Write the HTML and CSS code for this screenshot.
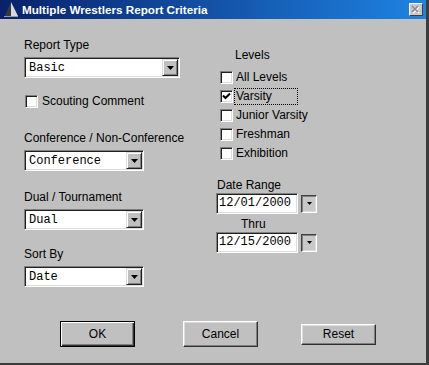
FILE: index.html
```html
<!DOCTYPE html>
<html lang="en">
<head>
    <meta charset="UTF-8">
    <title>Multiple Wrestlers Report Criteria</title>
    <link rel="stylesheet" href="styles.css">
</head>
<body>
    <div class="window">
        <div class="titlebar">
            <svg class="app-icon" width="16" height="15" viewBox="0 0 16 15">
                <polygon points="8,0 2,14 8,14" fill="#3a3a3a"/>
                <polygon points="8,0 8,14 15,14" fill="#d8d8d8"/>
                <line x1="1" y1="14.5" x2="15" y2="14.5" stroke="#9a9a9a"/>
            </svg>
            <span class="title">Multiple Wrestlers Report Criteria</span>
            <div class="close-btn">
                <svg width="10" height="9" viewBox="0 0 10 9">
                    <path d="M2 2 L8 8 M8 2 L2 8" stroke="#fff" stroke-width="1.6"/>
                    <path d="M1 1 L7 7 M7 1 L1 7" stroke="#8a8a8a" stroke-width="1.6"/>
                </svg>
            </div>
        </div>

        <div class="content">
            <div class="col-left">
                <div class="label lbl-report">Report Type</div>
                <div class="combo combo-wide">
                    <span class="combo-text">Basic</span>
                    <span class="drop"><svg width="7" height="4" viewBox="0 0 7 4"><polygon points="0,0 7,0 3.5,4" fill="#000"/></svg></span>
                </div>

                <div class="check check-scout">
                    <span class="box"></span>
                    <span class="check-text">Scouting Comment</span>
                </div>

                <div class="label lbl-conf">Conference / Non-Conference</div>
                <div class="combo">
                    <span class="combo-text">Conference</span>
                    <span class="drop"><svg width="7" height="4" viewBox="0 0 7 4"><polygon points="0,0 7,0 3.5,4" fill="#000"/></svg></span>
                </div>

                <div class="label lbl-dual">Dual / Tournament</div>
                <div class="combo">
                    <span class="combo-text">Dual</span>
                    <span class="drop"><svg width="7" height="4" viewBox="0 0 7 4"><polygon points="0,0 7,0 3.5,4" fill="#000"/></svg></span>
                </div>

                <div class="label lbl-sort">Sort By</div>
                <div class="combo">
                    <span class="combo-text">Date</span>
                    <span class="drop"><svg width="7" height="4" viewBox="0 0 7 4"><polygon points="0,0 7,0 3.5,4" fill="#000"/></svg></span>
                </div>
            </div>

            <div class="col-right">
                <div class="label lbl-levels">Levels</div>
                <div class="levels">
                    <div class="check level">
                        <span class="box"></span>
                        <span class="level-text">All Levels</span>
                    </div>
                    <div class="check level">
                        <span class="box">
                            <svg width="9" height="9" viewBox="0 0 9 9"><path d="M1 3.5 L3.5 6 L8 1.5" stroke="#000" stroke-width="2" fill="none"/></svg>
                        </span>
                        <span class="level-text focused">Varsity</span>
                    </div>
                    <div class="check level">
                        <span class="box"></span>
                        <span class="level-text">Junior Varsity</span>
                    </div>
                    <div class="check level">
                        <span class="box"></span>
                        <span class="level-text">Freshman</span>
                    </div>
                    <div class="check level">
                        <span class="box"></span>
                        <span class="level-text">Exhibition</span>
                    </div>
                </div>

                <div class="label lbl-range">Date Range</div>
                <div class="date-row">
                    <div class="date-field">12/01/2000</div>
                    <div class="date-btn"><svg width="5" height="3" viewBox="0 0 5 3"><polygon points="0,0 5,0 2.5,3" fill="#000"/></svg></div>
                </div>
                <div class="label lbl-thru">Thru</div>
                <div class="date-row">
                    <div class="date-field">12/15/2000</div>
                    <div class="date-btn"><svg width="5" height="3" viewBox="0 0 5 3"><polygon points="0,0 5,0 2.5,3" fill="#000"/></svg></div>
                </div>
            </div>
        </div>

        <div class="footer">
            <button class="btn btn-default btn-ok">OK</button>
            <button class="btn btn-cancel">Cancel</button>
            <button class="btn btn-reset">Reset</button>
        </div>
    </div>
</body>
</html>
```

FILE: styles.css
```css
body {
    margin: 0;
    font-family: "Liberation Sans", Arial, sans-serif;
    font-size: 12px;
    color: #000;
    background: #c0c0c0;
}
.window {
    width: 429px;
    height: 365px;
    box-sizing: border-box;
    display: flex;
    flex-direction: column;
    background: #c0c0c0;
    border-right: 3px solid #3c3c3c;
    border-bottom: 2px solid #3c3c3c;
}
.titlebar {
    height: 19px;
    display: flex;
    align-items: center;
    background: linear-gradient(to right, #08216b, #1e83e2);
}
.app-icon {
    margin-left: 3px;
}
.title {
    margin-left: 3px;
    color: #fff;
    font-weight: bold;
    font-size: 11.7px;
}
.close-btn {
    margin-left: auto;
    margin-right: 3px;
    width: 14px;
    height: 13px;
    box-sizing: border-box;
    display: flex;
    align-items: center;
    justify-content: center;
    background: #c8c8c8;
    border: 1px solid;
    border-color: #fff #404040 #404040 #fff;
}
.content {
    flex: 1;
    display: grid;
    grid-template-columns: 192px 1fr;
    padding-left: 24px;
}
.col-left,
.col-right {
    display: flex;
    flex-direction: column;
    align-items: flex-start;
}
.label {
    line-height: 14px;
    white-space: nowrap;
}
.lbl-report {
    margin-top: 19px;
}
.lbl-conf {
    margin-top: 23px;
}
.lbl-dual {
    margin-top: 19px;
}
.lbl-sort {
    margin-top: 17px;
}
.combo {
    margin-top: 5px;
    width: 120px;
    height: 21px;
    box-sizing: border-box;
    display: flex;
    align-items: center;
    background: #fff;
    border: 1px solid;
    border-color: #808080 #fff #fff #808080;
    box-shadow: inset 1px 1px #202020, inset -1px -1px #dcdcdc;
}
.combo-wide {
    width: 156px;
}
.combo-text {
    flex: 1;
    padding-left: 4px;
    font-family: "Liberation Mono", "Courier New", monospace;
    font-size: 12px;
}
.drop {
    width: 16px;
    height: 17px;
    box-sizing: border-box;
    margin-right: 1px;
    display: flex;
    align-items: center;
    justify-content: center;
    background: #c0c0c0;
    border: 1px solid;
    border-color: #dcdcdc #202020 #202020 #dcdcdc;
    box-shadow: inset 1px 1px #fff, inset -1px -1px #808080;
}
.check {
    display: flex;
    align-items: center;
}
.check-scout {
    margin-top: 17px;
    margin-left: 1px;
    height: 13px;
}
.check-text {
    margin-left: 4px;
    line-height: 13px;
}
.box {
    width: 13px;
    height: 13px;
    flex-shrink: 0;
    box-sizing: border-box;
    display: flex;
    align-items: center;
    justify-content: center;
    background: #fff;
    border: 1px solid;
    border-color: #808080 #fff #fff #808080;
    box-shadow: inset 1px 1px #202020, inset -1px -1px #dcdcdc;
}
.lbl-levels {
    margin-top: 29px;
    margin-left: 19px;
}
.levels {
    margin-top: 6px;
    margin-left: 4px;
}
.level {
    height: 19px;
}
.level-text {
    margin-left: 1px;
    width: 64px;
    height: 17px;
    line-height: 15px;
    box-sizing: border-box;
    padding-left: 1px;
    border: 1px dotted transparent;
    white-space: nowrap;
}
.level-text.focused {
    border-color: #000;
}
.lbl-range {
    margin-top: 15px;
    margin-left: 1px;
}
.lbl-thru {
    margin-top: 3px;
    margin-left: 25px;
}
.date-row {
    margin-top: 1px;
    display: flex;
    align-items: center;
}
.date-field {
    width: 82px;
    height: 21px;
    box-sizing: border-box;
    padding-left: 2px;
    line-height: 19px;
    font-family: "Liberation Mono", "Courier New", monospace;
    font-size: 12px;
    background: #fff;
    border: 1px solid;
    border-color: #808080 #fff #fff #808080;
    box-shadow: inset 1px 1px #202020, inset -1px -1px #dcdcdc;
}
.date-btn {
    margin-left: 3px;
    width: 16px;
    height: 18px;
    box-sizing: border-box;
    display: flex;
    align-items: center;
    justify-content: center;
    background: #c8c8c8;
    border: 1px solid;
    border-color: #404040 #fff #fff #404040;
    box-shadow: inset 1px 1px #808080, inset -1px -1px #dcdcdc;
}
.footer {
    height: 58px;
    display: flex;
    align-items: center;
}
.btn {
    width: 75px;
    height: 26px;
    box-sizing: border-box;
    padding: 0;
    font-family: "Liberation Sans", Arial, sans-serif;
    font-size: 12px;
    color: #000;
    background: #c0c0c0;
    border: 1px solid;
    border-color: #fff #303030 #303030 #fff;
    box-shadow: inset -1px -1px #808080, inset 1px 1px #dcdcdc;
}
.btn-default {
    border-color: #000;
    box-shadow: inset 1px 1px #fff, inset -1px -1px #303030, inset -2px -2px #808080;
}
.btn-ok {
    margin-left: 60px;
}
.btn-cancel {
    margin-left: 48px;
}
.btn-reset {
    margin-left: 43px;
    height: 21px;
}
```
